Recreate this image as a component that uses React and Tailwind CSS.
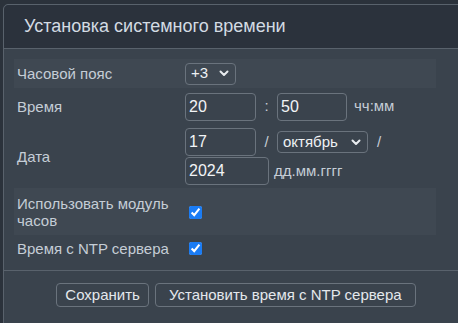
import React from 'react';

const Chevron = () => (
  <svg className="w-[10px] h-[7px]" viewBox="0 0 10 7" fill="none">
    <path d="M1.5 1.5L5 5L8.5 1.5" stroke="#e8ecef" strokeWidth="2" strokeLinecap="round" strokeLinejoin="round" />
  </svg>
);

const Select = ({ value, className }) => (
  <div className={`flex items-center justify-between h-[22px] border border-[#6a737d] rounded-[4px] pl-[5px] pr-[6px] text-[#eef1f4] ${className}`}>
    <span>{value}</span>
    <Chevron />
  </div>
);

const Input = ({ value, className }) => (
  <div className={`flex items-center h-[28px] border border-[#6a737d] rounded-[4px] px-[3px] text-[16px] text-[#f2f4f6] ${className}`}>
    {value}
  </div>
);

const Row = ({ label, light, h, children }) => (
  <div className={`flex items-center ${h} ${light ? 'bg-[#3f4852]' : 'bg-[#3a434d]'}`}>
    <div className="w-[171px] pl-[3px] pr-2 leading-[17px] text-[#c5cdd6]">{label}</div>
    <div className="flex-1 flex items-center">{children}</div>
  </div>
);

export default function App() {
  return (
    <div className="w-[458px] h-[323px] overflow-hidden bg-[#2b323b] pt-[4px] pl-[3px] text-[15px]" style={{ fontFamily: '"Liberation Sans", Arial, sans-serif' }}>
      <div className="w-[466px] h-[320px] border border-[#59626c] rounded-tl-[5px] bg-[#3a434d] flex flex-col">
        {/* Заголовок */}
        <div className="h-[44px] bg-[#2b323c] border-b border-[#59626c] flex items-center pl-5 text-[18px] text-[#d3dbe3] rounded-tl-[5px]">
          Установка системного времени
        </div>

        {/* Таблица */}
        <div className="p-[10px] pb-[8px] border-b border-[#59626c]">
          <div className="w-[422px]">
            <Row label="Часовой пояс" light h="h-[29px]">
              <Select value="+3" className="w-[51px]" />
            </Row>
            <Row label="Время" h="h-[37px]">
              <Input value="20" className="w-[71px]" />
              <span className="w-[21px] text-center text-[#c5cdd6]">:</span>
              <Input value="50" className="w-[70px]" />
              <span className="ml-[7px] text-[#c5cdd6]">чч:мм</span>
            </Row>
            <Row label="Дата" h="h-[63px]">
              <div className="flex flex-col gap-[1px]">
                <div className="flex items-center">
                  <Input value="17" className="w-[71px]" />
                  <span className="w-[21px] text-center text-[#c5cdd6]">/</span>
                  <Select value="октябрь" className="w-[91px]" />
                  <span className="ml-[9px] text-[#c5cdd6]">/</span>
                </div>
                <div className="flex items-center">
                  <Input value="2024" className="w-[84px]" />
                  <span className="ml-[5px] text-[#c5cdd6]">дд.мм.гггг</span>
                </div>
              </div>
            </Row>
            <Row label="Использовать модуль часов" light h="h-[47px]">
              <input type="checkbox" defaultChecked className="ml-[4px] mt-[2px] w-[13px] h-[13px] accent-[#1a7cf5]" />
            </Row>
            <Row label="Время с NTP сервера" h="h-[27px]">
              <input type="checkbox" defaultChecked className="ml-[4px] w-[13px] h-[13px] accent-[#1a7cf5]" />
            </Row>
          </div>
        </div>

        {/* Кнопки */}
        <div className="flex justify-center gap-[6px] pt-[12px]">
          <button className="h-[24px] px-[8px] border border-[#6a737d] rounded-[4px] text-[#e4e8ec]">Сохранить</button>
          <button className="h-[24px] px-[13px] border border-[#6a737d] rounded-[4px] text-[#e4e8ec]">Установить время с NTP сервера</button>
        </div>
      </div>
    </div>
  );
}
